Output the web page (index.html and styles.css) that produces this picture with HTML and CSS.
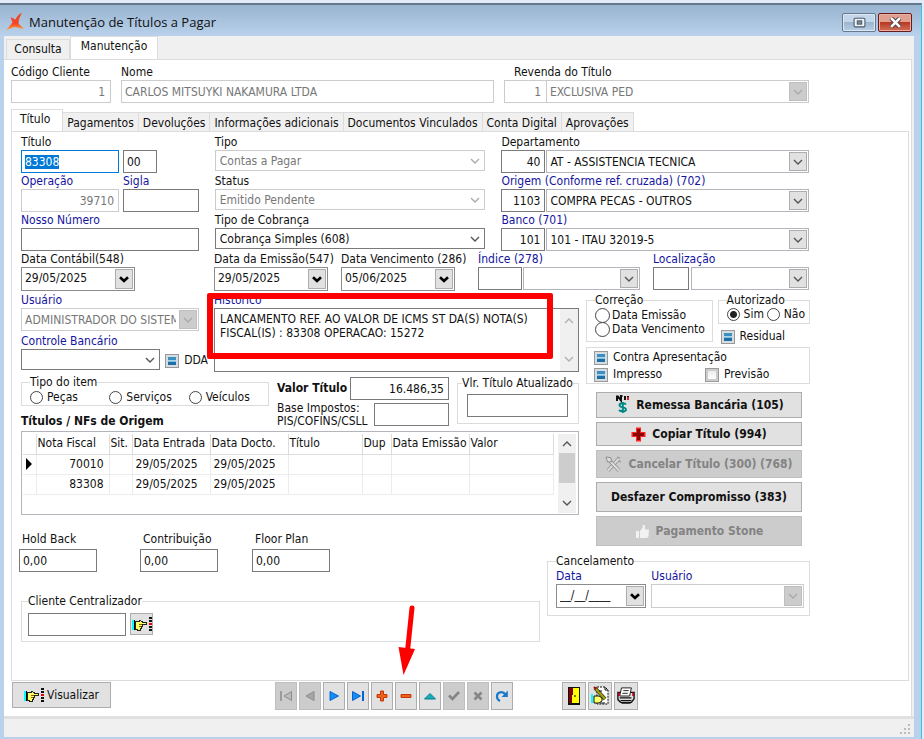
FILE: index.html
```html
<!DOCTYPE html>
<html lang="pt-BR">
<head>
<meta charset="utf-8">
<title>Manutenção de Títulos a Pagar</title>
<link rel="stylesheet" href="styles.css">
</head>
<body>
<svg class="defs" aria-hidden="true">
  <symbol id="chev" viewBox="0 0 10 6"><path d="M1 1l4 4 4-4" fill="none" stroke="currentColor" stroke-width="1.4"/></symbol>
  <symbol id="bold-chev" viewBox="0 0 10 7"><path d="M1 1.2l4 3.8 4-3.8" fill="none" stroke="#000" stroke-width="2.6"/></symbol>
  <symbol id="hand" viewBox="0 0 20 16" shape-rendering="crispEdges">
    <path d="M0 4h3v10H0z" fill="#0ff"/><path d="M2 4h1v10H2z" fill="#000"/>
    <path d="M3.500 5.500h3l2-1 2 1.500h4v2h-4v2h-1v2h-1v2h-3l-2-1z" fill="#ffff66" stroke="#222" stroke-width="1"/>
    <path d="M7 8.500h3M7 10.500h2" stroke="#806000"/>
    <path d="M17 1h3v2h-3zM17 4h3v2h-3zM17 10h3v2h-3zM17 13h3v2h-3z" fill="#111"/><path d="M17 7h3v2h-3z" fill="#e00"/>
  </symbol>
</svg>
<div class="window">
  <header class="titlebar">
    <svg class="logo" viewBox="0 0 18 18"><defs><linearGradient id="fire" x1="0" y1="0" x2="0" y2="1"><stop offset="0" stop-color="#f04a28"/><stop offset=".6" stop-color="#f4452a"/><stop offset="1" stop-color="#ffae28"/></linearGradient></defs><path d="M16 0C12.500 1 10.500 4 9.500 6.500L4.500 4l2 5.500L0 17.500C4 15.500 7 14 9.500 14l8.500 2-5.500-5.500C12.500 7 14 3 16 0z" fill="url(#fire)"/></svg>
    <h1>Manutenção de Títulos a Pagar</h1>
    <button class="win-btn" aria-label="Maximizar"><svg viewBox="0 0 12 10"><rect x="1" y="1" width="10" height="8" rx="1" fill="#eef3f8" stroke="#4d5a68"/><rect x="4" y="3.500" width="4" height="3" fill="#7c8ea2" stroke="#4d5a68"/></svg></button>
    <button class="win-btn close" aria-label="Fechar"><svg viewBox="0 0 12 10"><path d="M2 1l8 8M10 1L2 9" stroke="#54404a" stroke-width="4.200"/><path d="M2 1l8 8M10 1L2 9" stroke="#fff" stroke-width="2.400"/></svg></button>
  </header>
  <main class="client">
    <nav class="tabs outer"><button>Consulta</button><button class="active">Manutenção</button></nav>
    <div class="page">
      <div class="head">
        <div class="field"><label for="cod">Código Cliente</label><input id="cod" class="num" value="1" disabled></div>
        <div class="field"><label for="nome">Nome</label><input id="nome" value="CARLOS MITSUYKI NAKAMURA LTDA" disabled></div>
        <div class="field"><label for="rev" class="indent">Revenda do Título</label>
          <div class="pair joined"><input id="rev" class="num" value="1" disabled><span class="combo boxed off"><select aria-label="Revenda" disabled><option>EXCLUSIVA PED</option></select><i><svg><use href="#chev"/></svg></i></span></div></div>
      </div>
      <nav class="tabs inner"><button class="active">Título</button><button>Pagamentos</button><button>Devoluções</button><button>Informações adicionais</button><button>Documentos Vinculados</button><button>Conta Digital</button><button>Aprovações</button></nav>
      <section class="panel">
        <div class="top">
          <div class="pair titulo"><div class="field"><label for="titulo">Título</label><input id="titulo" value="83308"></div><div class="field"><label for="parc">&nbsp;</label><input id="parc" value="00"></div></div>
          <div class="field"><label for="tipo">Tipo</label><span class="combo flat off"><select id="tipo" disabled><option>Contas a Pagar</option></select><i><svg><use href="#chev"/></svg></i></span></div>
          <div class="field"><label for="dep">Departamento</label><div class="pair code"><input id="dep" class="num" value="40"><span class="combo boxed"><select aria-label="Departamento"><option>AT - ASSISTENCIA TECNICA</option></select><i><svg><use href="#chev"/></svg></i></span></div></div>

          <div class="pair oper"><div class="field"><label for="oper" class="blue">Operação</label><input id="oper" class="num" value="39710" disabled></div><div class="field"><label for="sigla" class="blue">Sigla</label><input id="sigla"></div></div>
          <div class="field"><label for="status">Status</label><span class="combo flat off"><select id="status" disabled><option>Emitido Pendente</option></select><i><svg><use href="#chev"/></svg></i></span></div>
          <div class="field"><label for="orig" class="blue">Origem (Conforme ref. cruzada) (702)</label><div class="pair code"><input id="orig" class="num" value="1103"><span class="combo boxed"><select aria-label="Origem"><option>COMPRA PECAS - OUTROS</option></select><i><svg><use href="#chev"/></svg></i></span></div></div>

          <div class="field"><label for="nosso" class="blue">Nosso Número</label><input id="nosso"></div>
          <div class="field"><label for="cobr">Tipo de Cobrança</label><span class="combo flat"><select id="cobr"><option>Cobrança Simples (608)</option></select><i><svg><use href="#chev"/></svg></i></span></div>
          <div class="field"><label for="banco" class="blue">Banco (701)</label><div class="pair code"><input id="banco" class="num" value="101"><span class="combo boxed"><select aria-label="Banco"><option>101 - ITAU 32019-5</option></select><i><svg><use href="#chev"/></svg></i></span></div></div>
        </div>
        <div class="dates">
          <div class="field"><label for="d1">Data Contábil(548)</label><span class="date"><input id="d1" value="29/05/2025"><button aria-label="Abrir calendário"><svg><use href="#bold-chev"/></svg></button></span></div>
          <div class="field"><label for="d2">Data da Emissão(547)</label><span class="date"><input id="d2" value="29/05/2025"><button aria-label="Abrir calendário"><svg><use href="#bold-chev"/></svg></button></span></div>
          <div class="field"><label for="d3">Data Vencimento (286)</label><span class="date"><input id="d3" value="05/06/2025"><button aria-label="Abrir calendário"><svg><use href="#bold-chev"/></svg></button></span></div>
          <div class="field"><label for="ind" class="blue">Índice (278)</label><div class="pair ind"><input id="ind"><span class="combo boxed"><select aria-label="Índice"><option></option></select><i><svg><use href="#chev"/></svg></i></span></div></div>
          <div class="field"><label for="loc" class="blue">Localização</label><div class="pair loc"><input id="loc"><span class="combo boxed"><select aria-label="Localização"><option></option></select><i><svg><use href="#chev"/></svg></i></span></div></div>
        </div>
        <div class="lower">
          <div class="left">
            <div class="histrow">
              <div class="user">
                <div class="field"><label for="usu" class="blue">Usuário</label><span class="combo boxed off"><select id="usu" disabled><option>ADMINISTRADOR DO SISTEMA</option></select><i><svg><use href="#chev"/></svg></i></span></div>
                <div class="field bank"><label for="ctrl" class="blue">Controle Bancário</label><div class="bankrow"><span class="combo flat"><select id="ctrl"><option></option></select><i><svg><use href="#chev"/></svg></i></span><label class="check"><input type="checkbox" checked>DDA</label></div></div>
              </div>
              <div class="field hist"><label for="hist" class="blue">Histórico</label>
                <div class="memo"><textarea id="hist">LANCAMENTO REF. AO VALOR DE ICMS ST DA(S) NOTA(S)
FISCAL(IS) : 83308 OPERACAO: 15272</textarea><div class="scroll"><svg class="up"><use href="#chev"/></svg><svg><use href="#chev"/></svg></div></div>
                <div class="highlight"></div>
              </div>
            </div>
            <div class="values">
              <div class="kind">
                <fieldset><legend>Tipo do item</legend><label class="radio"><input type="radio" name="item">Peças</label><label class="radio"><input type="radio" name="item">Serviços</label><label class="radio"><input type="radio" name="item">Veículos</label></fieldset>
                <h2>Títulos / NFs de Origem</h2>
              </div>
              <div class="amounts">
                <div><label for="valor" class="strong">Valor Título</label><input id="valor" class="num" value="16.486,35"></div>
                <div><label for="base">Base Impostos:<br>PIS/COFINS/CSLL</label><input id="base"></div>
              </div>
              <fieldset class="updated"><legend>Vlr. Título Atualizado</legend><input aria-label="Vlr. Título Atualizado"></fieldset>
            </div>
            <div class="gridbox">
              <table>
                <colgroup><col class="c-ind"><col class="c-nf"><col class="c-sit"><col class="c-date"><col class="c-date"><col class="c-tit"><col class="c-dup"><col class="c-date"><col class="c-val"></colgroup>
                <thead><tr><th></th><th>Nota Fiscal</th><th>Sit.</th><th>Data Entrada</th><th>Data Docto.</th><th>Título</th><th>Dup</th><th>Data Emissão</th><th>Valor</th></tr></thead>
                <tbody>
                  <tr><td><svg class="cursor" viewBox="0 0 6 12"><path d="M0 0l6 6-6 6z"/></svg></td><td class="num">70010</td><td></td><td>29/05/2025</td><td>29/05/2025</td><td></td><td></td><td></td><td></td></tr>
                  <tr><td></td><td class="num">83308</td><td></td><td>29/05/2025</td><td>29/05/2025</td><td></td><td></td><td></td><td></td></tr>
                </tbody>
              </table>
              <div class="scroll dark"><svg class="up"><use href="#chev"/></svg><div class="thumb"></div><svg><use href="#chev"/></svg></div>
            </div>
          </div>
          <div class="right">
            <div class="opts">
              <fieldset class="corr"><legend>Correção</legend><label class="radio big"><input type="radio" name="corr">Data Emissão</label><label class="radio big"><input type="radio" name="corr">Data Vencimento</label></fieldset>
              <div class="auth">
                <fieldset><legend>Autorizado</legend><label class="radio"><input type="radio" name="auth" checked>Sim</label><label class="radio"><input type="radio" name="auth">Não</label></fieldset>
                <label class="check"><input type="checkbox" checked>Residual</label>
              </div>
            </div>
            <div class="flags"><label class="check wide"><input type="checkbox" checked>Contra Apresentação</label><label class="check"><input type="checkbox" checked>Impresso</label><label class="check"><input type="checkbox">Previsão</label></div>
            <div class="actions">
              <button class="h26"><svg class="i20" viewBox="0 0 16 20"><path d="M3 6V1.500h1L7 5.500V1h1.500" fill="none" stroke="#111" stroke-width="2"/><path d="M10 1h2v4h-2zM13 1h2v1h-2z" fill="#111"/><path d="M13 2h2v3h-2z" fill="#d22"/><path d="M12 9.500C11 8 5.500 7.500 5.500 10.200c0 2.800 6.500 1.500 6.500 4.200 0 2.600-5.500 2.300-7 .6M8.800 7v11" fill="none" stroke="#088" stroke-width="1.900"/></svg>Remessa Bancária (105)</button>
              <button class="h23"><svg class="i15" viewBox="0 0 15 15"><path d="M5 .5h5V5h4.500v5H10v4.500H5V10H.5V5H5z" fill="#f22"/><path d="M6 2h3v4h4v3H9v4H6V9H2V6h4z" fill="#800"/></svg>Copiar Título (994)</button>
              <button class="h28" disabled><svg class="i17" viewBox="0 0 17 17"><path d="M3 14.500L13.500 3" stroke="#8e8e8e" stroke-width="3.500"/><path d="M3 14.500L13.500 3" stroke="#ddd" stroke-width="2"/><path d="M4 4l10 10.500" stroke="#8e8e8e" stroke-width="3.500"/><path d="M4 4l10 10.500" stroke="#ddd" stroke-width="2"/><path d="M1 1l5 .8.500 4-4 .2zM12 1l3 1M14 5l2 1" fill="#ddd" stroke="#8e8e8e"/></svg>Cancelar Título (300) (768)</button>
              <button class="h30">Desfazer Compromisso (383)</button>
              <button class="h30" disabled><svg class="i15" viewBox="0 0 15 15"><path d="M1 7h3v7H1zM5 7l2.500-3L8 1h2v4.500h4l-.5 7L12 14H5z" fill="#f2f2f2"/></svg>Pagamento Stone</button>
            </div>
          </div>
          <div class="extra">
            <div class="trio">
              <div class="field"><label for="hb">Hold Back</label><input id="hb" value="0,00"></div>
              <div class="field"><label for="ct">Contribuição</label><input id="ct" value="0,00"></div>
              <div class="field"><label for="fp">Floor Plan</label><input id="fp" value="0,00"></div>
            </div>
            <fieldset class="central"><legend>Cliente Centralizador</legend><input aria-label="Cliente Centralizador"><button aria-label="Localizar cliente"><svg><use href="#hand"/></svg></button></fieldset>
          </div>
          <fieldset class="cancel"><legend>Cancelamento</legend>
            <div class="field"><label for="cd" class="blue">Data</label><span class="date"><input id="cd" value="__/__/____"><button aria-label="Abrir calendário"><svg><use href="#bold-chev"/></svg></button></span></div>
            <div class="field"><label for="cu" class="blue">Usuário</label><span class="combo boxed off"><select id="cu" disabled><option></option></select><i><svg><use href="#chev"/></svg></i></span></div>
          </fieldset>
        </div>
      </section>
      <div class="toolbar">
        <button class="view"><svg><use href="#hand"/></svg>Visualizar</button>
        <div class="navset">
          <button disabled aria-label="Primeiro"><svg viewBox="0 0 14 14"><path d="M2 2v10" stroke="#8c8c8c" stroke-width="1.500"/><path d="M12.500 2.500v9L5 7z" fill="#bbb" stroke="#8c8c8c"/></svg></button>
          <button disabled aria-label="Anterior"><svg viewBox="0 0 14 14"><path d="M11 2.500v9L3 7z" fill="#a6a6a6" stroke="#8c8c8c"/></svg></button>
          <button aria-label="Próximo"><svg viewBox="0 0 14 14"><path d="M3 2.500v9L11.500 7z" fill="#178cf5" stroke="#0763d2"/></svg></button>
          <button aria-label="Último"><svg viewBox="0 0 14 14"><path d="M1.500 2.500v9L9.500 7z" fill="#178cf5" stroke="#0763d2"/><path d="M12 2v10" stroke="#0763d2" stroke-width="2"/></svg></button>
          <button aria-label="Incluir"><svg viewBox="0 0 14 14"><path d="M5.500 2h3v3.500H12v3H8.500V12h-3V8.500H2v-3h3.500z" fill="#f2601c" stroke="#c23a08"/></svg></button>
          <button aria-label="Excluir"><svg viewBox="0 0 14 14"><path d="M2 5.500h10v3H2z" fill="#f2601c" stroke="#c23a08"/></svg></button>
          <button aria-label="Editar"><svg viewBox="0 0 14 14"><path d="M1.500 10L7 4.500 12.500 10z" fill="#17b0b8" stroke="#087c92"/></svg></button>
          <button disabled aria-label="Gravar"><svg viewBox="0 0 14 14"><path d="M2 6.500L5.500 10 12 3" fill="none" stroke="#858585" stroke-width="2.600"/></svg></button>
          <button disabled aria-label="Cancelar"><svg viewBox="0 0 14 14"><path d="M3.500 3.500l7 7m0-7l-7 7" stroke="#858585" stroke-width="2.600"/></svg></button>
          <button aria-label="Atualizar"><svg viewBox="0 0 14 14"><path d="M5 12C1 10 1 5 4.500 3.500 7 2.400 9 3.500 10.500 5.500" fill="none" stroke="#1878cc" stroke-width="2.200"/><path d="M12.800 1.500V8H6.500z" fill="#1878cc"/></svg></button>
        </div>
        <div class="tools">
          <button aria-label="Sair"><svg viewBox="0 0 18 20" shape-rendering="crispEdges"><path d="M3 1h12v18H3z" fill="#111"/><path d="M4 2h4v15H4z" fill="#800000"/><path d="M8 2h6v15H7z" fill="#ff0"/><path d="M9 9h2v2H9z" fill="#770"/></svg></button>
          <button aria-label="Anotações"><svg viewBox="0 0 18 20"><path d="M6 1h8l3 3v14H6z" fill="#fff" stroke="#111" stroke-dasharray="2 1"/><path d="M14 1v3h3" fill="none" stroke="#111"/><path d="M4 2l10 11" stroke="#333" stroke-width="3.500"/><path d="M4 2l10 11" stroke="#a5a500" stroke-width="2"/><path d="M3 1l2 2" stroke="#a00" stroke-width="2"/><path d="M0 8h2v9H0z" fill="#0ff"/><path d="M3 10h5l3 2v3l-3 2H3z" fill="#ff6" stroke="#111"/><path d="M9 17h5M8 5h3" stroke="#111"/></svg></button>
          <button aria-label="Imprimir"><svg viewBox="0 0 20 20"><path d="M1 6h18v7l-3 4H4l-3-3z" fill="#ddd" stroke="#111" stroke-width="1.500"/><path d="M5 1h11l-2 9H3z" fill="#fff" stroke="#111"/><path d="M7 4h6M6 7h6" stroke="#111"/><path d="M3 12h13M4 15h12M5 18h10" stroke="#111" stroke-width="1.300"/><path d="M1 6h2v4H1zM17 6h2v4h-2z" fill="#b00020"/></svg></button>
        </div>
      </div>
    </div>
  </main>
  <footer class="status"><svg viewBox="0 0 12 12"><path d="M9 1h2v2H9zM9 5h2v2H9zM5 5h2v2H5zM9 9h2v2H9zM5 9h2v2H5zM1 9h2v2H1z" fill="#bdbdbd"/></svg></footer>
  <svg class="pointer" viewBox="0 0 18 70"><path d="M14 3L9.500 46" stroke="#f00" stroke-width="5" stroke-linecap="round"/><path d="M.5 42L17 44 5.500 70z" fill="#f00"/></svg>
</div>
<script src="form.js"></script>
</body>
</html>
```
FILE: form.js
```js
// The first field starts focused with its content selected.
var first = document.getElementById('titulo');
first.focus();
first.select();
```
FILE: styles.css
```css
* { box-sizing: border-box; }
body { margin: 0; background: #e3ebfa; color: #111; font: 12px/15px "DejaVu Sans Condensed", "Liberation Sans", sans-serif; }
h1, h2, fieldset, legend { margin: 0; padding: 0; }
legend { white-space: nowrap; }
input, select, textarea, button { font: inherit; color: inherit; margin: 0; border-radius: 0; min-width: 0; }
input:focus, select:focus { outline: none; }
::selection { background: #0078d7; color: #fff; }
.defs { position: absolute; width: 0; height: 0; }
.num { text-align: right; }
.blue { color: #1414a0; }
.strong, h2 { font-size: 12px; font-weight: bold; }

.window { position: relative; display: flex; flex-direction: column; min-height: calc(100vh - 3px); margin-top: 3px; margin-right: 2px; padding: 0 7px 2px 4px; border-top: 2px solid #66788a; border-right: 1px solid #38c4e8; background: #b9d1ea; }
.titlebar { display: flex; align-items: center; height: 31px; margin: 0 -7px 0 -4px; padding: 3px 9px 0 6px; background: linear-gradient(#99b4d1, #b9d1ea); }
.logo { width: 18px; height: 18px; margin-right: 5px; }
h1 { flex: 1; font: 13px/20px "Open Sans", "Noto Sans", sans-serif; }
.win-btn { display: grid; place-items: center; width: 34px; height: 19px; margin-left: 2px; padding: 0; border: 1px solid #66788c; border-radius: 2px; background: linear-gradient(#c3d5e8 45%, #9cb5cf 50%, #b8cfe6); box-shadow: inset 0 0 0 1px #dce8f4; }
.win-btn.close { border-color: #6a1a1a; background: linear-gradient(#e0a090 45%, #b83a24 50%, #d07058); box-shadow: inset 0 0 0 1px #e8b0a4; }
.win-btn svg { width: 13px; height: 11px; }

.client { flex: 1; display: flex; flex-direction: column; background: #f0f0f0; }
.tabs { display: flex; align-items: flex-end; }
.tabs button { height: 20px; padding: 0; border: 1px solid #dcdcdc; border-bottom: 0; border-left-width: 0; background: #f0f0f0; white-space: nowrap; }
.tabs button.active { background: #fff; border-left-width: 1px; padding-bottom: 3px; }
.outer { height: 23px; padding-left: 2px; }
.outer button { width: 64px; border-left-width: 1px; }
.outer button.active { width: 88px; height: 23px; }
.page { flex: 1; display: flex; flex-direction: column; margin-right: 2px; padding: 5px 0 5px 7px; border: 1px solid #dcdcdc; border-width: 1px 1px 0 0; background: #fff; }

.field { display: flex; flex-direction: column; min-width: 0; }
.field > label { height: 15px; white-space: nowrap; }
.field input, .amounts input, fieldset > input { height: 23px; padding: 0 3px; border: 1px solid #7a7a7a; background: #fff; width: 100%; }
input.num { padding-right: 4px; }
.field input:disabled { border-color: #ccc; color: #777; }
#titulo { border-color: #0078d7; }
.pair { display: grid; }
.combo { position: relative; display: flex; height: 23px; min-width: 0; }
.combo select { appearance: none; width: 100%; padding: 2px 22px 0 3px; border: 1px solid #b4b4bc; background: #fff; color: #111; opacity: 1; }
.combo i { position: absolute; top: 2px; right: 2px; bottom: 2px; width: 18px; display: grid; place-items: center; color: #555; pointer-events: none; }
.combo i svg { width: 10px; height: 6px; }
.boxed i { background: #e1e1e1; border: 1px solid #adadad; }
.flat { height: 21px; margin-bottom: 2px; }
.flat select { padding-top: 1px; padding-left: 4px; border-color: #7a7a7a; }
.flat i { right: 1px; }
.off select { color: #777; border-color: #ccc; }
.off i { color: #aaa; }
.boxed.off i { background: #ccc; border-color: #bfbfbf; }

.head { display: grid; grid-template-columns: 100fr 373fr 305fr; column-gap: 10px; max-width: 798px; }
.head .num { padding-right: 5px; }
.indent { padding-left: 10px; }
.joined { grid-template-columns: 42px 1fr; }
.joined input { border-right: 0; }
.inner { height: 22px; margin-top: 6px; }
.inner button { height: 19px; padding: 2px 4px 0; }
.inner button.active { height: 22px; padding: 0 12px 3px 8px; }
.panel { flex: 1; margin-right: 2px; padding: 3px 0 0 9px; border: 1px solid #dcdcdc; }

.top { display: grid; grid-template-columns: 178fr 271fr 308fr; column-gap: 16px; row-gap: 1px; max-width: 788px; }
.titulo { grid-template-columns: 98px 34px; column-gap: 4px; }
.oper { grid-template-columns: 98px 1fr; column-gap: 4px; }
.code { grid-template-columns: 44px 1fr; column-gap: 1px; }
.dates { display: grid; grid-template-columns: 180fr 114fr 124fr 162fr 156fr; column-gap: 13px; max-width: 788px; margin-top: 1px; }
.date { display: flex; height: 24px; max-width: 114px; padding: 1px 1px 1px 0; border: 1px solid #8c8c8c; }
.date input { flex: 1; height: 18px; border: 0; }
.date button { display: grid; place-items: center; width: 18px; padding: 0; border: 1px solid #adadad; background: #e1e1e1; }
.date button svg { width: 10px; height: 7px; }
.ind { grid-template-columns: 44px 1fr; column-gap: 1px; }
.loc { grid-template-columns: 36px 1fr; column-gap: 2px; }

.lower { display: grid; grid-template-columns: 519fr 32fr 224fr; grid-template-rows: 234px 26px auto; column-gap: 7px; max-width: 789px; margin-top: 2px; }
.left { grid-column: 1 / 3; grid-row: 1; }
.right { grid-column: 3; grid-row: 1 / 3; }
.extra { grid-column: 1; grid-row: 2 / 4; padding-top: 5px; }
.cancel { grid-column: 2 / 4; grid-row: 3; }
.histrow { display: grid; grid-template-columns: 187fr 365fr; column-gap: 6px; height: 77px; }
.user > .field:first-child { margin-right: 9px; }
.bank { margin-top: 3px; }
.bankrow { display: flex; }
.bankrow .combo { flex: 1; margin-right: 5px; }
.check { display: flex; align-items: center; gap: 5px; white-space: nowrap; }
.check input, .field .check input { flex: none; appearance: none; width: 14px; height: 14px; padding: 2px; border: 1px solid #999; background: linear-gradient(#ececec, #fff) content-box, #ccc; }
.check input:checked, .field .check input:checked { background: linear-gradient(#3d8fc0 0 35%, #a8d6ec 40% 55%, #1d6fa5 60% 100%) content-box, #d6dde2; }
.hist { position: relative; }
.memo { flex: 1; display: flex; border: 1px solid #7a7a7a; }
.memo textarea { flex: 1; padding: 3px 0 0 5px; border: 0; resize: none; outline: none; background: #fff; overflow: hidden; white-space: pre; line-height: 14px; }
.scroll { display: flex; flex-direction: column; justify-content: space-between; align-items: center; width: 18px; padding: 9px 0; background: #f0f0f0; color: #b0b0b0; }
.scroll svg { width: 10px; height: 6px; }
.scroll .up { transform: rotate(180deg); }
.highlight { position: absolute; top: 0; left: -7px; width: 346px; height: 66px; border: 6px solid #f00; border-radius: 2px; pointer-events: none; }

fieldset { border: 1px solid #dcdcdc; min-width: 0; }
.radio { display: flex; align-items: center; gap: 4px; white-space: nowrap; }
.radio input { flex: none; appearance: none; width: 13px; height: 13px; border: 1px solid #444; border-radius: 50%; background: #fff; }
.radio input:checked { background: radial-gradient(#222 0 3px, #fff 4px); }
.values { display: grid; grid-template-columns: 248fr 172fr 122fr; column-gap: 8px; height: 61px; padding-top: 5px; }
.kind { display: flex; flex-direction: column; }
.kind fieldset { display: grid; grid-template-columns: repeat(3, 1fr); height: 31px; padding: 0 0 0 8px; }
.kind .radio { height: 14px; }
h2 { line-height: 15px; margin-top: 8px; white-space: nowrap; }
.amounts { display: grid; grid-template-rows: 23px 23px; row-gap: 3px; padding-top: 2px; }
.amounts div { display: flex; justify-content: space-between; align-items: center; white-space: nowrap; line-height: 13px; }
.amounts input { width: 75px; }
.amounts #valor { width: 99px; }
.updated { height: 48px; margin-top: 1px; padding: 3px 2px 0 4px; }
.updated input { width: 101px; margin-left: 5px; }
.gridbox { display: flex; justify-content: space-between; height: 84px; padding: 2px 2px 1px 1px; border: 1px solid #b4b4bc; }
table { table-layout: fixed; width: 530px; border-collapse: collapse; align-self: flex-start; }
th, td { height: 20px; padding: 0 3px; border: 1px solid #ececec; border-width: 0 1px 1px 0; font-weight: normal; text-align: left; white-space: nowrap; line-height: 15px; }
th { padding: 0 0 0 1px; border-color: #dcdcdc; }
td.num { text-align: right; padding-right: 5px; }
.cursor { display: block; width: 6px; height: 12px; }
.c-ind { width: 13px; } .c-nf { width: 73px; } .c-sit { width: 23px; } .c-date { width: 78px; } .c-tit { width: 74px; } .c-dup { width: 29px; } .c-val { width: 84px; }
.dark { color: #555; justify-content: flex-start; padding: 7px 0; }
.thumb { flex: none; width: 16px; height: 30px; margin: 6px 0 auto; background: #cdcdcd; }

.opts { display: grid; grid-template-columns: 126fr 92fr; column-gap: 5px; height: 50px; }
.corr { height: 49px; padding-left: 8px; }
.radio.big { height: 14px; gap: 2px; }
.radio.big input { width: 15px; height: 15px; }
.auth fieldset { display: flex; justify-content: space-between; height: 31px; padding: 0 4px 0 8px; }
.auth fieldset .radio { height: 12px; }
.auth .check { margin: 5px 0 0 3px; }
.flags { display: grid; grid-template-columns: 111px 1fr; height: 37px; margin-top: 4px; padding: 2px 0 0 7px; border: 1px solid #dcdcdc; align-content: start; row-gap: 2px; }
.flags .wide { grid-column: 1 / 3; }
.actions { display: flex; flex-direction: column; gap: 4px; margin: 8px 8px 0 10px; }
.actions button { display: flex; align-items: center; justify-content: center; gap: 6px; padding: 0; border: 1px solid #adadad; background: #e1e1e1; font-weight: bold; white-space: nowrap; }
.actions button:disabled { background: #ccc; border-color: #bfbfbf; color: #838383; }
.h26 { height: 26px; } .h23 { height: 24px; } .h28 { height: 28px; } .h30 { height: 30px; }
.i20 { width: 16px; height: 20px; } .i15 { width: 15px; height: 15px; } .i17 { width: 17px; height: 17px; }

.trio { display: grid; grid-template-columns: 121px 112px 78px; margin-left: -2px; }
.trio .field input { width: 78px; }
.trio label { padding-left: 3px; margin-bottom: 2px; }
.central { display: flex; align-items: flex-start; gap: 4px; height: 48px; margin-top: 22px; padding: 4px 6px 0; }
.central input { width: 98px; }
.central button, .view, .navset button, .tools button { display: grid; place-items: center; padding: 0; border: 1px solid #adadad; background: #e1e1e1; }
.central button { width: 23px; height: 22px; }
.central button svg, .view svg { width: 20px; height: 16px; }
.cancel { display: grid; grid-template-columns: 90fr 152fr; column-gap: 5px; height: 62px; margin-top: 1px; padding: 0 5px 0 8px; align-content: start; align-self: start; }
.cancel .combo { height: 24px; }

.toolbar { display: grid; grid-template-columns: 262fr 285fr 347fr; align-items: start; height: 30px; padding: 1px 0 0 1px; }
.toolbar .view { display: flex; align-items: center; justify-content: center; gap: 3px; width: 99px; height: 26px; }
.navset, .tools { display: flex; gap: 2px; }
.navset button { width: 22px; height: 28px; }
.navset button:disabled { background: #ccc; border-color: #bfbfbf; }
.navset svg { width: 14px; height: 14px; }
.tools button { width: 24px; height: 28px; }
.tools svg { width: 18px; height: 20px; }
.status { display: flex; justify-content: flex-end; align-items: flex-end; height: 21px; padding: 0 3px 2px; border-top: 3px solid #e0e0e0; background: #f0f0f0; }
.status svg { width: 12px; height: 12px; }
.pointer { position: absolute; top: 600px; left: 398px; width: 18px; height: 70px; pointer-events: none; }
```
